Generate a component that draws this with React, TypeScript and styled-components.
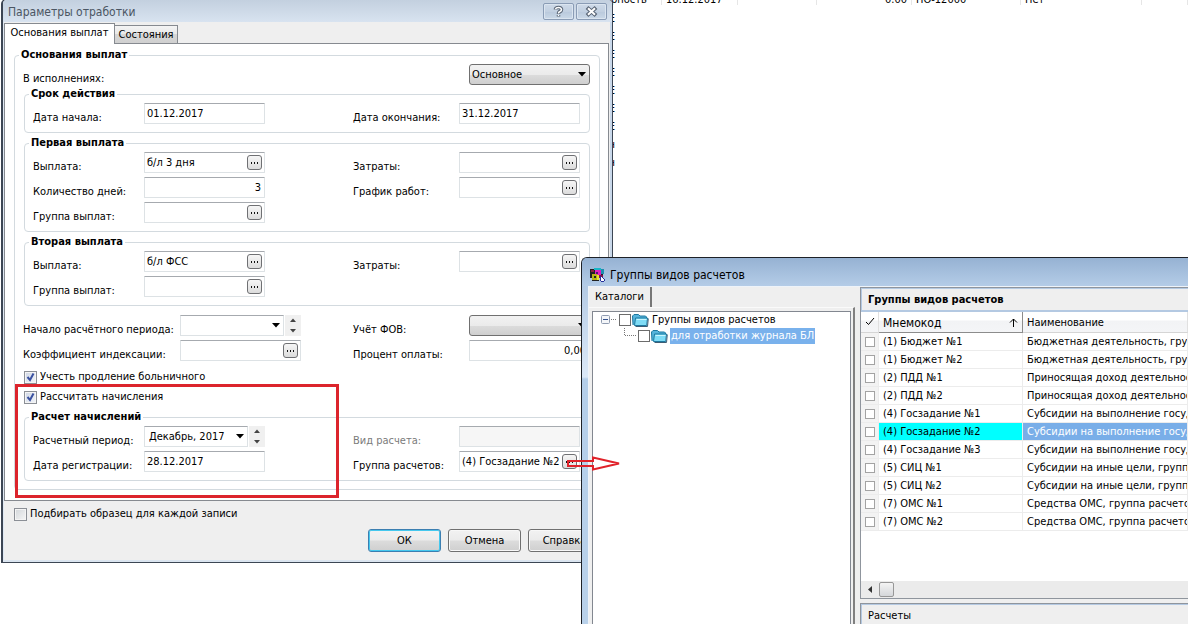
import React from 'react';
import styled, { createGlobalStyle, css } from 'styled-components';

const Global = createGlobalStyle`
  *, *::before, *::after { box-sizing: border-box; }
  body {
    margin: 0;
    background: #fff;
    color: #000;
    font: 11px/14px "DejaVu Sans Condensed", Tahoma, "Noto Sans", sans-serif;
    overflow: hidden;
  }
  input, button, select { font: inherit; color: inherit; margin: 0; }
`;

const Desktop = styled.main`
  position: relative;
  min-height: 100vh;
  overflow: hidden;
`;

/* ---- list that stays behind the windows ---- */

const BackRow = styled.div`
  display: grid;
  grid-template-columns: 55px 76px 79px 95px 109px 121px 1fr;
  height: 5px;
  padding-left: 607px;
  overflow: hidden;
`;

const BackCell = styled.span<{ $right?: boolean }>`
  height: 5px;
  padding: 0 4px;
  border-right: 1px solid #e6e6e6;
  line-height: 0;
  text-align: ${(p) => (p.$right ? 'right' : 'left')};
  white-space: nowrap;
`;

const BackEdge = styled.div`
  width: 615px;
  padding-top: 5px;
  line-height: 18px;
  text-align: right;
`;

/* ---- windows ---- */

const ParamsWindow = styled.section`
  position: absolute;
  left: 1px;
  top: -1px;
  width: 612px;
  display: flex;
  flex-direction: column;
  border: 1px solid #3c4654;
  border-left-width: 2px;
  border-radius: 5px 5px 0 0;
  background: #efefef;
  box-shadow: inset 1px 0 0 #dfe8f3, inset -2px 0 0 #c9d8ea, inset 0 -2px 0 #dbe5f0;
`;

const GroupsWindow = styled.section`
  position: absolute;
  left: 581px;
  right: 0;
  top: 257px;
  bottom: 0;
  display: flex;
  flex-direction: column;
  border: solid #1d2127;
  border-width: 1px 0 0 1px;
  border-top-left-radius: 6px;
  background: linear-gradient(#a5bfdd, #c3d6ec 60px, #dbe8f7 119px, #b4cee9 121px, #b9d1ea);
  overflow: hidden;
`;

const TitleBar = styled.header<{ $active?: boolean }>`
  display: flex;
  align-items: center;
  flex: none;
  ${(p) =>
    p.$active
      ? css`
          height: 28px;
          padding: 6px 0 0 7px;
          gap: 4px;
          background: linear-gradient(#96b2d3, #b4cce7);
        `
      : css`
          height: 22px;
          padding: 1px 5px 0 5px;
          gap: 2px;
          color: #4b5663;
          border-top-left-radius: 4px;
          border-top-right-radius: 4px;
          background: linear-gradient(#c3d0df, #d8e3f0);
        `}
`;

const WindowTitle = styled.h1`
  flex: 1;
  margin: 0;
  font-size: 12px;
  font-weight: normal;
`;

const CaptionButton = styled.button`
  display: flex;
  align-items: center;
  justify-content: center;
  width: 31px;
  height: 17px;
  padding: 0;
  border: 1px solid #8a9cb5;
  border-radius: 2px;
  background: linear-gradient(#cedae8, #c2d0e1 50%, #b9c9dc 51%, #cbd9e8);
  box-shadow: inset 0 0 0 1px #dbe5f0;
`;

/* ---- tabs ---- */

const TabBar = styled.nav`
  display: flex;
  align-items: flex-end;
  height: 21px;
  padding-left: 1px;
`;

const Tab = styled.button<{ $current?: boolean }>`
  border: 1px solid #868a90;
  white-space: nowrap;
  text-align: center;
  ${(p) =>
    p.$current
      ? css`
          position: relative;
          width: 111px;
          height: 21px;
          margin-bottom: -1px;
          padding: 0 0 3px;
          border-bottom: 0;
          background: #fff;
        `
      : css`
          width: 63px;
          height: 18px;
          padding: 0;
          border-left: 0;
          border-bottom: 0;
          background: linear-gradient(#f4f4f4, #e9e9e9 45%, #d6d6d6 50%, #d0d0d0);
        `}
`;

const TabPage = styled.div`
  margin: 0 3px 0 1px;
  padding: 4px 8px 10px 9px;
  border: 1px solid #868a90;
  background: #fff;
`;

/* ---- form ---- */

const Group = styled.fieldset<{ $outer?: boolean }>`
  margin: ${(p) => (p.$outer ? '0' : '2px 1px 3px')};
  padding: 2px 8px 8px;
  min-width: 0;
  border: 1px solid #d3dadf;
  border-radius: 4px;
  &:last-child { margin-bottom: 0; }
`;

const Legend = styled.legend`
  margin-left: -4px;
  padding: 0 2px;
  font-weight: bold;
  line-height: 14px;
`;

const Row = styled.div<{ $wide?: boolean }>`
  display: grid;
  grid-template-columns: ${(p) =>
    p.$wide ? '157px 121px 52px 116px 121px' : '111px 121px 88px 106px 121px'};
  height: 21px;
  & + & { margin-top: 4px; }
`;

const RowBlock = styled.div`
  padding: 6px 0 9px;
`;

const FieldLabel = styled.label<{ $column?: number; $muted?: boolean }>`
  grid-column: ${(p) => p.$column || 1};
  padding-top: 8px;
  line-height: 14px;
  white-space: nowrap;
  color: ${(p) => (p.$muted ? '#7b7b7b' : '#000')};
`;

const Box = styled.div<{ $column: number; $muted?: boolean }>`
  grid-column: ${(p) => p.$column};
  display: flex;
  align-items: center;
  min-width: 0;
  height: 21px;
  padding-right: 2px;
  border: 1px solid #dde2e5;
  border-top-color: #a6aaaf;
  border-radius: 1px;
  background: ${(p) => (p.$muted ? '#f6f6f6' : '#fff')};
`;

const TextInput = styled.input<{ $right?: boolean }>`
  flex: 1;
  min-width: 0;
  height: 19px;
  padding: 0 1px 0 2px;
  border: 0;
  outline: 0;
  background: transparent;
  text-align: ${(p) => (p.$right ? 'right' : 'left')};
`;

const PickButton = styled.button`
  display: flex;
  align-items: center;
  justify-content: center;
  flex: none;
  width: 15px;
  height: 15px;
  padding: 0;
  border: 1px solid #6f7073;
  border-radius: 3px;
  background: linear-gradient(#f6f6f6, #dcdcdc);
`;

const DropDown = styled.div<{ $column: number }>`
  grid-column: ${(p) => p.$column};
  position: relative;
  height: 21px;
  svg { position: absolute; right: 4px; top: 8px; pointer-events: none; }
`;

const Select = styled.select`
  appearance: none;
  width: 100%;
  height: 21px;
  padding: 0 16px 0 2px;
  border: 1px solid #707070;
  border-radius: 3px;
  outline: 0;
  background: linear-gradient(#f2f2f2, #ebebeb 50%, #dcdcdc 51%, #cfcfcf);
`;

const PeriodCell = styled.div`
  display: flex;
  gap: 1px;
`;

const PeriodDropDown = styled.div`
  position: relative;
  flex: 1;
  svg { position: absolute; right: 4px; top: 8px; pointer-events: none; }
`;

const PeriodSelect = styled.select`
  appearance: none;
  width: 100%;
  height: 21px;
  padding: 0 14px 0 4px;
  border: 1px solid #dde2e5;
  border-top-color: #a6aaaf;
  outline: 0;
  background: #fff;
`;

const Spinner = styled.div`
  display: flex;
  flex-direction: column;
  width: 16px;
  height: 21px;
  background: #f0f0f0;
`;

const SpinButton = styled.button`
  display: flex;
  flex: 1;
  align-items: center;
  justify-content: center;
  padding: 0;
  border: 0;
  background: transparent;
`;

const Checks = styled.div`
  padding: 0 1px 4px;
`;

const CheckLine = styled.label`
  display: flex;
  align-items: center;
  gap: 3px;
  height: 14px;
  & + & { margin-top: 6px; }
`;

const CheckBox = styled.input`
  appearance: none;
  flex: none;
  width: 13px;
  height: 13px;
  border: 1px solid #8b8f96;
  background: linear-gradient(135deg, #d2d6da, #f6f6f6);
  box-shadow: inset 0 0 0 1px #f4f4f4;
  &:checked {
    background: url("data:image/svg+xml,%3Csvg xmlns='http://www.w3.org/2000/svg' viewBox='0 0 11 11'%3E%3Cpath d='M2.500 5l2.500 3 3.500-6.500' fill='none' stroke='%233a51a0' stroke-width='2'/%3E%3C/svg%3E") center / 11px 11px no-repeat,
      linear-gradient(135deg, #cfd6e4, #f2f5fa);
  }
`;

const Footer = styled.footer`
  display: flex;
  flex-direction: column;
  gap: 8px;
  padding: 6px 11px 10px 11px;
`;

const Actions = styled.div`
  display: flex;
  justify-content: flex-end;
  gap: 7px;
`;

const ActionButton = styled.button<{ $primary?: boolean }>`
  width: 73px;
  height: 23px;
  padding: 0;
  border: 1px solid ${(p) => (p.$primary ? '#3c7fb1' : '#707070')};
  border-radius: 3px;
  background: linear-gradient(#f2f2f2, #ebebeb 48%, #dcdcdc 52%, #cfcfcf);
  box-shadow: inset 0 0 0 1px ${(p) => (p.$primary ? '#45c8ee' : '#f8f8f8')};
`;

/* ---- groups window content ---- */

const Body = styled.div`
  display: flex;
  flex: 1;
  min-height: 0;
  margin-left: 6px;
  border: solid #eef3f9;
  border-width: 1px 0 0 1px;
  background: #efefef;
`;

const TreePane = styled.div`
  display: flex;
  flex-direction: column;
  flex: none;
  width: 271px;
  padding-right: 5px;
`;

const CatalogTab = styled.button`
  align-self: flex-start;
  width: 63px;
  height: 20px;
  padding: 0 0 0 6px;
  border: 0;
  border-right: 2px solid #777;
  background: #efefef;
  text-align: left;
`;

const TreeFrame = styled.div`
  display: flex;
  flex: 1;
  padding: 3px 2px 0 3px;
  border-top: 1px solid #fafafa;
  border-right: 2px solid #808080;
`;

const Tree = styled.ul`
  flex: 1;
  margin: 0;
  padding: 0 0 0 8px;
  border: 1px solid #828790;
  border-bottom: 0;
  background: #fff;
  list-style: none;
`;

const TreeItem = styled.li<{ $level: number }>`
  display: flex;
  align-items: center;
  height: 16px;
  padding-left: ${(p) => (p.$level ? 23 : 0)}px;
`;

const TreeCheck = styled.input`
  appearance: none;
  flex: none;
  width: 12px;
  height: 12px;
  border: 1px solid #6c6c6c;
  background: #fff;
`;

const TreeText = styled.span<{ $selected?: boolean }>`
  height: 16px;
  margin-left: 2px;
  padding: 0 1px;
  line-height: 16px;
  white-space: nowrap;
  color: ${(p) => (p.$selected ? '#fff' : '#000')};
  background: ${(p) => (p.$selected ? '#79b1ec' : 'transparent')};
`;

const ListPane = styled.div`
  display: flex;
  flex-direction: column;
  flex: 1;
  min-width: 0;
  overflow: hidden;
`;

const ListFrame = styled.div`
  display: flex;
  flex-direction: column;
  flex: 1;
  border: 1px solid #8f959d;
  border-right: 0;
  background: #fff;
`;

const PaneTitle = styled.h2<{ $plain?: boolean }>`
  flex: none;
  height: 24px;
  margin: 0;
  padding-left: 6px;
  border: 1px solid #b4c9e2;
  border-bottom-width: 2px;
  border-right: 0;
  background: #efefef;
  font-size: 11px;
  font-weight: ${(p) => (p.$plain ? 'normal' : 'bold')};
  line-height: 22px;
`;

const Table = styled.table`
  width: 100%;
  table-layout: fixed;
  border-collapse: separate;
  border-spacing: 0;
  col:first-child { width: 18px; }
  col:nth-child(2) { width: 144px; }
`;

const HeadCell = styled.th<{ $sorted?: boolean }>`
  height: 21px;
  padding: 2px 4px 0;
  border-right: 1px solid ${(p) => (p.$sorted ? '#8c8c8c' : '#e0e0e0')};
  border-bottom: 1px solid ${(p) => (p.$sorted ? '#8c8c8c' : '#d5d5d5')};
  background: linear-gradient(#fff 40%, #f2f3f5 45%, #f4f5f7);
  font-size: ${(p) => (p.$sorted ? 12 : 11)}px;
  font-weight: normal;
  text-align: left;
`;

const HeadLine = styled.span`
  display: flex;
  justify-content: space-between;
  align-items: center;
`;

const Cell = styled.td<{ $tone?: 'mark' | 'key' | 'text' }>`
  height: 18px;
  padding: 0 4px;
  border-right: 1px solid #ececec;
  border-bottom: 1px solid #ececec;
  white-space: nowrap;
  overflow: hidden;
  line-height: 17px;
  ${(p) => p.$tone === 'mark' && 'background: #f3f3f3;'}
  ${(p) => p.$tone === 'key' && 'background: #00ffff;'}
  ${(p) => p.$tone === 'text' && 'background: #79aee8; color: #fff;'}
`;

const MarkBox = styled.input`
  appearance: none;
  display: block;
  width: 10px;
  height: 10px;
  border: 1px solid #a3a3a3;
  background: #fff;
`;

const ScrollBar = styled.div`
  display: flex;
  align-items: center;
  height: 17px;
  margin-top: auto;
  background: #ebebeb;
`;

const ScrollArrow = styled.button`
  display: flex;
  align-items: center;
  justify-content: center;
  width: 18px;
  height: 17px;
  padding: 0;
  border: 0;
  background: transparent;
`;

const ScrollThumb = styled.button`
  width: 15px;
  height: 15px;
  padding: 0;
  border: 1px solid #979797;
  border-radius: 2px;
  background: linear-gradient(#f4f4f4, #d5d7da);
`;

const LowerPane = styled.div`
  flex: none;
  height: 21px;
  margin-top: 4px;
  border: 1px solid #8f959d;
  border-width: 1px 0 0 1px;
  overflow: hidden;
`;

/* ---- callouts over the windows ---- */

const Highlight = styled.div`
  position: absolute;
  left: 15px;
  top: 384px;
  width: 324px;
  height: 114px;
  border: 3px solid #dc242c;
  pointer-events: none;
`;

const Arrow = styled.svg`
  position: absolute;
  left: 565px;
  top: 455px;
  pointer-events: none;
`;

/* ---- drawings ---- */

const Caret = () => (
  <svg width="8" height="5" viewBox="0 0 8 5" aria-hidden="true">
    <path d="M0 0h8L4 4.500z" fill="#000" />
  </svg>
);

const Dots = () => (
  <svg width="9" height="3" viewBox="0 0 9 3" aria-hidden="true" shapeRendering="crispEdges">
    <path d="M1 1h1v2H1zM4 1h1v2H4zM7 1h1v2H7z" fill="#111" />
  </svg>
);

const Folder = () => (
  <svg width="18" height="14" viewBox="0 0 18 14" aria-hidden="true">
    <path d="M2 12 1.500 3 3 1.500h4.500L9 3h5.500l1 1v3" fill="#56b4dc" stroke="#1d789f" />
    <path d="M3.500 12.500 4.500 5h12l-.8 7.500z" fill="#7fdcf6" stroke="#1d789f" strokeLinejoin="round" />
    <path d="M5.500 6.500h10" stroke="#c9f6ff" />
    <path d="M4.500 13.500h12l.8-8" fill="none" stroke="#3d5d75" />
  </svg>
);

const AppIcon = () => (
  <svg width="17" height="16" viewBox="0 0 17 16" aria-hidden="true" shapeRendering="crispEdges">
    <path d="M1 2h13v6H1z" fill="#222" />
    <path d="M5 1h7v2H5z" fill="#19b6c6" />
    <path d="M12 2h3v5h-3z" fill="#1c8fb0" />
    <path d="M2 3h3v2H2z" fill="#8a1f3c" />
    <path d="M6 3h6v5H6z" fill="#e01fc0" />
    <path d="M7 5h2v2H7z" fill="#4a1a70" />
    <path d="M3 7h5v6H3z" fill="#b7b416" />
    <path d="M1 7h2v4H1zM5 9h2v2H5zM3 13h7v1H3z" fill="#222" />
    <path d="M8 8h2v5H8z" fill="#e9e02c" />
    <path d="M10 8h4v3h-4z" fill="#7d1550" />
    <path d="M12 10h2v1h1v1h1v2h-1v1h-2v-1h-1z" fill="#fff" />
    <path d="M11 9h1v5h-1zM12 14h1v1h-1zM13 15h2v-1h-2zM15 12h1v2h-1zM13 10h1v1h-1zM14 11h1v1h-1z" fill="#27309c" />
  </svg>
);

const TreeNode = () => (
  <svg width="18" height="16" viewBox="0 0 18 16" aria-hidden="true">
    <rect x=".5" y="3.500" width="8" height="8" rx="1" fill="#f4f6f9" stroke="#8f9bb0" />
    <path d="M2 7h5v1H2z" fill="#33508c" />
    <path d="M10 7h1v1h-1zM12 7h1v1h-1zM14 7h1v1h-1z" fill="#777" />
  </svg>
);

const TreeBranch = () => (
  <svg width="14" height="16" viewBox="0 0 14 16" aria-hidden="true" shapeRendering="crispEdges">
    <path d="M.5 0v8M1 7.500h11" stroke="#777" strokeDasharray="1 1" fill="none" />
  </svg>
);

const SpinArrow = ({ down }: { down?: boolean }) => (
  <svg width="6" height="4" viewBox="0 0 6 4" aria-hidden="true">
    <path d={down ? 'M0 0h6L3 3.500z' : 'M0 4h6L3 .5z'} fill="#444" />
  </svg>
);

/* ---- form pieces ---- */

type FieldProps = {
  id: string;
  label: string;
  value?: string;
  second?: boolean;
  picker?: boolean;
  right?: boolean;
  muted?: boolean;
};

const Field = ({ id, label, value = '', second, picker, right, muted }: FieldProps) => (
  <>
    <FieldLabel htmlFor={id} $column={second ? 4 : 1} $muted={muted}>
      {label}
    </FieldLabel>
    <Box $column={second ? 5 : 2} $muted={muted}>
      <TextInput id={id} defaultValue={value} $right={right} disabled={muted} />
      {picker && (
        <PickButton type="button" aria-label={`Выбрать: ${label}`}>
          <Dots />
        </PickButton>
      )}
    </Box>
  </>
);

const Period = ({ id, label, value }: { id: string; label: string; value: string }) => (
  <>
    <FieldLabel htmlFor={id}>{label}</FieldLabel>
    <PeriodCell>
      <PeriodDropDown>
        <PeriodSelect id={id}>
          <option>{value}</option>
        </PeriodSelect>
        <Caret />
      </PeriodDropDown>
      <Spinner>
        <SpinButton type="button" aria-label="Следующий период">
          <SpinArrow />
        </SpinButton>
        <SpinButton type="button" aria-label="Предыдущий период">
          <SpinArrow down />
        </SpinButton>
      </Spinner>
    </PeriodCell>
  </>
);

const ROWS: [string, string][] = [
  ['(1) Бюджет №1', 'Бюджетная деятельность, группа расчетов №1'],
  ['(1) Бюджет №2', 'Бюджетная деятельность, группа расчетов №2'],
  ['(2) ПДД №1', 'Приносящая доход деятельность, группа №1'],
  ['(2) ПДД №2', 'Приносящая доход деятельность, группа №2'],
  ['(4) Госзадание №1', 'Субсидии на выполнение государственного задания'],
  ['(4) Госзадание №2', 'Субсидии на выполнение государственного задания'],
  ['(4) Госзадание №3', 'Субсидии на выполнение государственного задания'],
  ['(5) СИЦ №1', 'Субсидии на иные цели, группа расчетов №1'],
  ['(5) СИЦ №2', 'Субсидии на иные цели, группа расчетов №2'],
  ['(7) ОМС №1', 'Средства ОМС, группа расчетов №1'],
  ['(7) ОМС №2', 'Средства ОМС, группа расчетов №2'],
];

const SELECTED = 5;

const ParamsDialog = () => (
  <ParamsWindow>
    <TitleBar>
      <WindowTitle>Параметры отработки</WindowTitle>
      <CaptionButton type="button" aria-label="Справка">
        <svg width="11" height="13" viewBox="0 0 11 13" aria-hidden="true">
          <path d="M2.500 4.500V4Q3 2.500 5.500 2.500T8.500 4.500Q8.500 6 7 6.500T5.500 9M5.500 10v1.500" fill="none" stroke="#5a6676" strokeWidth="3.500" />
          <path d="M2.500 4.200V4Q3 2.500 5.500 2.500T8.500 4.500Q8.500 6 7 6.500T5.500 8.500M5.500 10v1" fill="none" stroke="#fff" strokeWidth="1.500" />
        </svg>
      </CaptionButton>
      <CaptionButton type="button" aria-label="Закрыть">
        <svg width="13" height="11" viewBox="0 0 13 11" aria-hidden="true">
          <path d="M2 1.500 11 9.500M11 1.500 2 9.500" stroke="#5a6676" strokeWidth="4" />
          <path d="M3 2.200 10 8.800M10 2.200 3 8.800" stroke="#fff" strokeWidth="2" />
        </svg>
      </CaptionButton>
    </TitleBar>
    <TabBar>
      <Tab type="button" $current>Основания выплат</Tab>
      <Tab type="button">Состояния</Tab>
    </TabBar>
    <TabPage>
      <Group $outer>
        <Legend>Основания выплат</Legend>
        <Row $wide>
          <FieldLabel htmlFor="version">В исполнениях:</FieldLabel>
          <DropDown $column={5}>
            <Select id="version">
              <option>Основное</option>
            </Select>
            <Caret />
          </DropDown>
        </Row>
        <Group>
          <Legend>Срок действия</Legend>
          <Row>
            <Field id="from" label="Дата начала:" value="01.12.2017" />
            <Field id="to" label="Дата окончания:" value="31.12.2017" second />
          </Row>
        </Group>
        <Group>
          <Legend>Первая выплата</Legend>
          <Row>
            <Field id="pay1" label="Выплата:" value="б/л 3 дня" picker />
            <Field id="cost1" label="Затраты:" second picker />
          </Row>
          <Row>
            <Field id="days" label="Количество дней:" value="3" right />
            <Field id="schedule" label="График работ:" second picker />
          </Row>
          <Row>
            <Field id="group1" label="Группа выплат:" picker />
          </Row>
        </Group>
        <Group>
          <Legend>Вторая выплата</Legend>
          <Row>
            <Field id="pay2" label="Выплата:" value="б/л ФСС" picker />
            <Field id="cost2" label="Затраты:" second picker />
          </Row>
          <Row>
            <Field id="group2" label="Группа выплат:" picker />
          </Row>
        </Group>
        <RowBlock>
          <Row $wide>
            <Period id="start" label="Начало расчётного периода:" value="" />
            <FieldLabel htmlFor="fov" $column={4}>Учёт ФОВ:</FieldLabel>
            <DropDown $column={5}>
              <Select id="fov">
                <option></option>
              </Select>
              <Caret />
            </DropDown>
          </Row>
          <Row $wide>
            <Field id="index" label="Коэффициент индексации:" picker />
            <Field id="percent" label="Процент оплаты:" value="0,00" second right />
          </Row>
        </RowBlock>
        <Checks>
          <CheckLine>
            <CheckBox type="checkbox" defaultChecked />
            Учесть продление больничного
          </CheckLine>
          <CheckLine>
            <CheckBox type="checkbox" defaultChecked />
            Рассчитать начисления
          </CheckLine>
        </Checks>
        <Group>
          <Legend>Расчет начислений</Legend>
          <Row>
            <Period id="period" label="Расчетный период:" value="Декабрь, 2017" />
            <Field id="kind" label="Вид расчета:" second muted />
          </Row>
          <Row>
            <Field id="reg" label="Дата регистрации:" value="28.12.2017" />
            <Field id="calc" label="Группа расчетов:" value="(4) Госзадание №2" second picker />
          </Row>
        </Group>
      </Group>
    </TabPage>
    <Footer>
      <CheckLine>
        <CheckBox type="checkbox" />
        Подбирать образец для каждой записи
      </CheckLine>
      <Actions>
        <ActionButton type="button" $primary>ОК</ActionButton>
        <ActionButton type="button">Отмена</ActionButton>
        <ActionButton type="button">Справка</ActionButton>
      </Actions>
    </Footer>
  </ParamsWindow>
);

const GroupsDialog = () => (
  <GroupsWindow>
    <TitleBar $active>
      <AppIcon />
      <WindowTitle>Группы видов расчетов</WindowTitle>
    </TitleBar>
    <Body>
      <TreePane>
        <CatalogTab type="button">Каталоги</CatalogTab>
        <TreeFrame>
          <Tree>
            <TreeItem $level={0}>
              <TreeNode />
              <TreeCheck type="checkbox" aria-label="Группы видов расчетов" />
              <Folder />
              <TreeText>Группы видов расчетов</TreeText>
            </TreeItem>
            <TreeItem $level={1}>
              <TreeBranch />
              <TreeCheck type="checkbox" aria-label="для отработки журнала БЛ" />
              <Folder />
              <TreeText $selected>для отработки журнала БЛ</TreeText>
            </TreeItem>
          </Tree>
        </TreeFrame>
      </TreePane>
      <ListPane>
        <ListFrame>
          <PaneTitle>Группы видов расчетов</PaneTitle>
          <Table>
            <colgroup>
              <col />
              <col />
              <col />
            </colgroup>
            <thead>
              <tr>
                <HeadCell aria-label="Отметка">
                  <svg width="11" height="9" viewBox="0 0 11 9" aria-hidden="true">
                    <path d="M1 5l2.500 2.500L9 1" fill="none" stroke="#000" />
                  </svg>
                </HeadCell>
                <HeadCell $sorted>
                  <HeadLine>
                    Мнемокод
                    <svg width="9" height="10" viewBox="0 0 9 10" aria-hidden="true">
                      <path d="M4.500 9V1M1 4.500l3.500-3.500L8 4.500" fill="none" stroke="#000" />
                    </svg>
                  </HeadLine>
                </HeadCell>
                <HeadCell>Наименование</HeadCell>
              </tr>
            </thead>
            <tbody>
              {ROWS.map(([code, name], i) => (
                <tr key={code}>
                  <Cell $tone="mark">
                    <MarkBox type="checkbox" aria-label={code} />
                  </Cell>
                  <Cell $tone={i === SELECTED ? 'key' : undefined}>{code}</Cell>
                  <Cell $tone={i === SELECTED ? 'text' : undefined}>{name}</Cell>
                </tr>
              ))}
            </tbody>
          </Table>
          <ScrollBar>
            <ScrollArrow type="button" aria-label="Прокрутить влево">
              <svg width="4" height="7" viewBox="0 0 4 7" aria-hidden="true">
                <path d="M4 0v7L0 3.500z" fill="#333" />
              </svg>
            </ScrollArrow>
            <ScrollThumb type="button" aria-label="Прокрутка" />
          </ScrollBar>
        </ListFrame>
        <LowerPane>
          <PaneTitle $plain>Расчеты</PaneTitle>
        </LowerPane>
      </ListPane>
    </Body>
  </GroupsWindow>
);

export default function App() {
  return (
    <Desktop>
      <Global />
      <BackRow>
        <BackCell>рность</BackCell>
        <BackCell>16.12.2017</BackCell>
        <BackCell />
        <BackCell $right>0.00</BackCell>
        <BackCell>ПО-12000</BackCell>
        <BackCell>Нет</BackCell>
        <BackCell />
      </BackRow>
      <BackEdge>
        {['Е', 'Е', 'Е', 'Е', 'Е', 'Е', 'Е', 'н', 'н'].map((letter, i) => (
          <div key={i}>{letter}</div>
        ))}
      </BackEdge>
      <ParamsDialog />
      <GroupsDialog />
      <Highlight />
      <Arrow width="58" height="18" viewBox="0 0 58 18" aria-hidden="true">
        <path d="M3 6h25V2.500L54 8.500 28 14.500V11H3z" fill="none" stroke="#e0222a" strokeWidth="2" />
      </Arrow>
    </Desktop>
  );
}
